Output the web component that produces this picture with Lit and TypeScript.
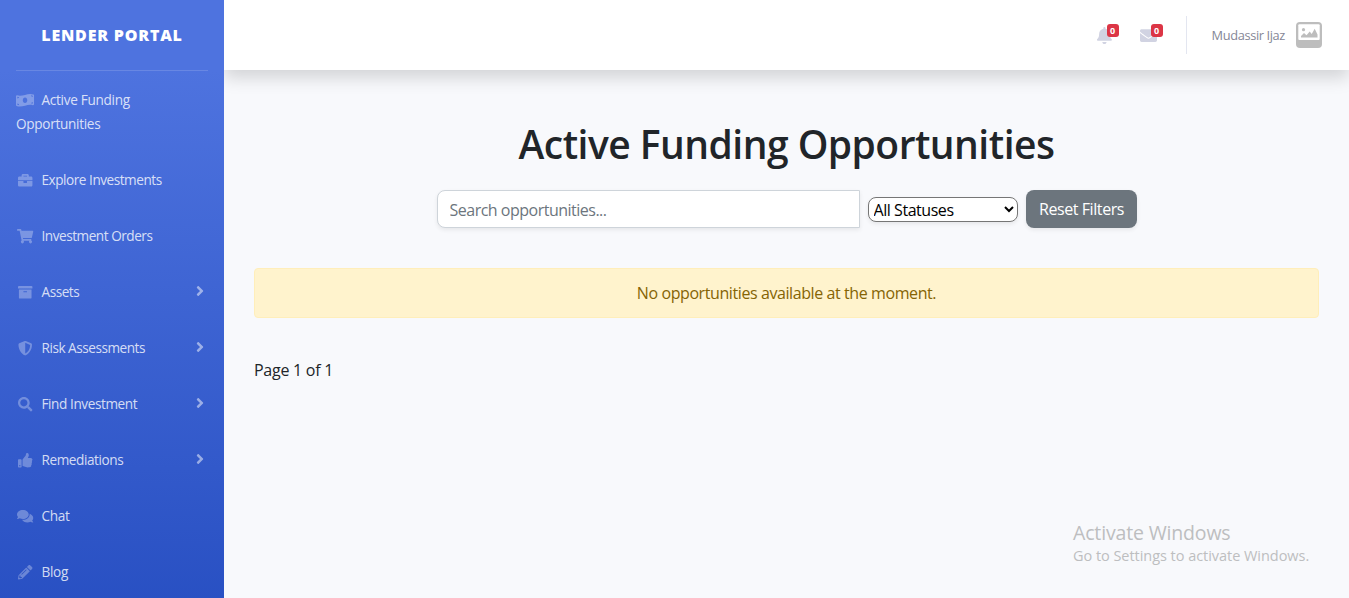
import { LitElement, html, css, svg } from "lit";
import { customElement, property } from "lit/decorators.js";

const ICONS: Record<string, [number, string]> = {
  money: [640, "M621.16 54.46C582.37 38.19 543.55 32 504.75 32c-123.17-.01-246.33 62.34-369.5 62.34-30.89 0-61.76-3.92-92.65-13.72-3.47-1.1-6.95-1.62-10.35-1.62C15.04 79 0 92.32 0 110.81v317.26c0 12.63 7.23 24.6 18.84 29.46C57.63 473.81 96.45 480 135.25 480c123.17 0 246.34-62.35 369.51-62.35 30.89 0 61.76 3.92 92.65 13.72 3.47 1.1 6.95 1.62 10.35 1.62 17.21 0 32.25-13.32 32.25-31.81V83.93c-.01-12.64-7.24-24.6-18.85-29.47zM48 132.22c20.12 5.04 41.12 7.57 62.72 8.93C104.84 170.54 79 192.69 48 192.69v-60.47zm0 285v-47.78c34.37 0 62.18 27.27 63.71 61.4-22.53-1.81-43.59-6.31-63.71-13.62zM320 352c-44.19 0-80-42.99-80-96 0-53.02 35.82-96 80-96s80 42.98 80 96c0 53.03-35.83 96-80 96zm272 27.78c-17.52-4.39-35.71-6.85-54.32-8.44 5.87-26.08 27.5-45.88 54.32-49.28v57.72zm0-236.11c-30.89-3.91-54.86-29.7-55.81-61.55 19.54 2.17 38.09 6.23 55.81 12.66v48.89z"],
  briefcase: [512, "M320 336c0 8.84-7.16 16-16 16h-96c-8.84 0-16-7.16-16-16v-48H0v144c0 25.6 22.4 48 48 48h416c25.6 0 48-22.4 48-48V288H320v48zm144-208h-80V80c0-25.6-22.4-48-48-48H176c-25.6 0-48 22.4-48 48v48H48c-25.6 0-48 22.4-48 48v80h512v-80c0-25.6-22.4-48-48-48zm-144 0H192V96h128v32z"],
  cart: [576, "M528.12 301.319l47.273-208C578.806 78.301 567.391 64 551.99 64H159.208l-9.166-44.81C147.758 8.021 137.93 0 126.529 0H24C10.745 0 0 10.745 0 24v16c0 13.255 10.745 24 24 24h69.883l70.248 343.435C147.325 417.1 136 435.222 136 456c0 30.928 25.072 56 56 56s56-25.072 56-56c0-15.674-6.447-29.835-16.824-40h209.647C430.447 426.165 424 440.326 424 456c0 30.928 25.072 56 56 56s56-25.072 56-56c0-22.172-12.888-41.332-31.579-50.405l5.517-24.276c3.413-15.018-8.002-29.319-23.403-29.319H218.117l-6.545-32h293.145c11.206 0 20.92-7.754 23.403-18.681z"],
  archive: [512, "M32 448c0 17.7 14.3 32 32 32h384c17.7 0 32-14.3 32-32V160H32v288zm160-212c0-6.6 5.4-12 12-12h104c6.6 0 12 5.4 12 12v8c0 6.6-5.4 12-12 12H204c-6.6 0-12-5.4-12-12v-8zM480 32H32C14.3 32 0 46.3 0 64v48c0 8.8 7.2 16 16 16h480c8.8 0 16-7.2 16-16V64c0-17.7-14.3-32-32-32z"],
  shield: [512, "M466.5 83.7l-192-80a48.15 48.15 0 0 0-36.9 0l-192 80C27.7 91.1 16 108.6 16 128c0 198.5 114.5 335.7 221.5 380.3 11.8 4.9 25.1 4.9 36.9 0C360.1 472.6 496 349.3 496 128c0-19.4-11.7-36.9-29.5-44.3zM256.1 446.3l-.1-381 175.9 73.3c-3.3 151.4-82.1 261.1-175.8 307.7z"],
  search: [512, "M505 442.7L405.3 343c-4.5-4.5-10.6-7-17-7H372c27.6-35.3 44-79.7 44-128C416 93.1 322.9 0 208 0S0 93.1 0 208s93.1 208 208 208c48.3 0 92.7-16.4 128-44v16.3c0 6.4 2.5 12.5 7 17l99.7 99.7c9.4 9.4 24.6 9.4 33.9 0l28.3-28.3c9.4-9.4 9.4-24.6.1-34zM208 336c-70.7 0-128-57.2-128-128 0-70.7 57.2-128 128-128 70.7 0 128 57.2 128 128 0 70.7-57.2 128-128 128z"],
  thumb: [512, "M104 224H24c-13.255 0-24 10.745-24 24v240c0 13.255 10.745 24 24 24h80c13.255 0 24-10.745 24-24V248c0-13.255-10.745-24-24-24zM64 472c-13.255 0-24-10.745-24-24s10.745-24 24-24 24 10.745 24 24-10.745 24-24 24zM384 81.452c0 42.416-25.97 66.208-33.277 94.548h101.723c33.397 0 59.397 27.746 59.553 58.098.084 17.938-7.546 37.249-19.439 49.197l-.11.11c9.836 23.337 8.237 56.037-9.308 79.469 8.681 25.895-.069 57.704-16.382 74.757 4.298 17.598 2.244 32.575-6.148 44.632C440.202 511.587 389.616 512 346.839 512l-2.845-.001c-48.287-.017-87.806-17.598-119.56-31.725-15.957-7.099-36.821-15.887-52.651-16.178-6.54-.12-11.783-5.457-11.783-11.998v-213.77c0-3.2 1.282-6.271 3.558-8.521 39.614-39.144 56.648-80.587 89.117-113.111 14.804-14.832 20.188-37.236 25.393-58.902C282.515 39.293 291.817 0 312 0c24 0 72 8 72 81.452z"],
  comments: [576, "M416 192c0-88.4-93.1-160-208-160S0 103.6 0 192c0 34.3 14.1 65.9 38 92-13.4 30.2-35.5 54.2-35.8 54.5-2.2 2.3-2.8 5.7-1.5 8.7S4.8 352 8 352c36.6 0 66.9-12.3 88.7-25 32.2 15.7 70.3 25 111.3 25 114.9 0 208-71.6 208-160zm122 220c23.9-26 38-57.7 38-92 0-66.9-53.5-124.2-129.3-148.1.9 6.6 1.3 13.3 1.3 20.1 0 105.9-107.7 192-240 192-10.8 0-21.3-.8-31.7-1.9C207.8 439.6 281.8 480 368 480c41 0 79.1-9.2 111.3-25 21.8 12.7 52.1 25 88.7 25 3.2 0 6.1-1.9 7.3-4.8 1.3-2.9.7-6.3-1.5-8.7-.3-.3-22.4-24.2-35.8-54.5z"],
  pencil: [512, "M497.9 142.1l-46.1 46.1c-4.7 4.7-12.3 4.7-17 0l-111-111c-4.7-4.7-4.7-12.3 0-17l46.1-46.1c18.7-18.7 49.1-18.7 67.9 0l60.1 60.1c18.8 18.7 18.8 49.1 0 67.9zM284.2 99.8L21.6 362.4.4 483.9c-2.9 16.4 11.4 30.6 27.8 27.8l121.5-21.3 262.6-262.6c4.7-4.7 4.7-12.3 0-17l-111-111c-4.8-4.7-12.4-4.7-17.1 0zM124.1 339.9c-5.5-5.5-5.5-14.3 0-19.8l154-154c5.5-5.5 14.3-5.5 19.8 0s5.5 14.3 0 19.8l-154 154c-5.5 5.5-14.3 5.5-19.8 0zM88 424h48v36.3l-64.5 11.3-31.1-31.1L51.7 376H88v48z"],
  bell: [448, "M224 512c35.32 0 63.97-28.65 63.97-64H160.03c0 35.35 28.65 64 63.97 64zm215.39-149.71c-19.32-20.76-55.47-51.99-55.47-154.29 0-77.7-54.48-139.9-127.94-155.16V32c0-17.67-14.32-32-31.98-32s-31.98 14.33-31.98 32v20.84C118.56 68.1 64.08 130.3 64.08 208c0 102.3-36.15 133.53-55.47 154.29-6 6.45-8.66 14.16-8.61 21.71.11 16.4 12.98 32 32.1 32h383.8c19.12 0 32-15.6 32.1-32 .05-7.55-2.61-15.27-8.61-21.71z"],
  envelope: [512, "M502.3 190.8c3.9-3.1 9.7-.2 9.7 4.7V400c0 26.5-21.5 48-48 48H48c-26.5 0-48-21.5-48-48V195.6c0-5 5.7-7.8 9.7-4.7 22.4 17.4 52.1 39.5 154.1 113.6 21.1 15.4 56.7 47.8 92.2 47.6 35.7.3 72-32.8 92.3-47.6 102-74.1 131.6-96.3 154-113.7zM256 320c23.2.4 56.6-29.2 73.4-41.4 132.7-96.3 142.8-104.7 173.4-128.7 5.8-4.5 9.2-11.5 9.2-18.9v-19c0-26.5-21.5-48-48-48H48c-26.5 0-48 21.5-48 48v19c0 7.4 3.4 14.3 9.2 18.9 30.6 23.9 40.7 32.4 173.4 128.7 16.8 12.2 50.2 41.8 73.4 41.4z"],
  angle: [256, "M224.3 273l-136 136c-9.4 9.4-24.6 9.4-33.9 0l-22.6-22.6c-9.4-9.4-9.4-24.6 0-33.9l96.4-96.4-96.4-96.4c-9.4-9.4-9.4-24.6 0-33.9L54.3 103c9.4-9.4 24.6-9.4 33.9 0l136 136c9.5 9.4 9.5 24.6.1 34z"],
};

@customElement("fa-icon")
class FaIcon extends LitElement {
  static styles = css`
    :host { display: inline-flex; justify-content: center; align-items: center; }
    svg { display: block; flex: none; height: 1em; width: auto; fill: currentColor; overflow: visible; }
  `;
  @property() name = "bell";
  render() {
    const [w, d] = ICONS[this.name];
    return html`<svg viewBox="0 0 ${w} 512">${svg`<path d=${d}></path>`}</svg>`;
  }
}

interface NavItem { icon: string; label: string; cls: string; expandable?: boolean }

const NAV: NavItem[] = [
  { icon: "money", label: "Active Funding Opportunities", cls: "snug" },
  { icon: "briefcase", label: "Explore Investments", cls: "tight" },
  { icon: "cart", label: "Investment Orders", cls: "tight" },
  { icon: "archive", label: "Assets", cls: "tight", expandable: true },
  { icon: "shield", label: "Risk Assessments", cls: "tight", expandable: true },
  { icon: "search", label: "Find Investment", cls: "medium", expandable: true },
  { icon: "thumb", label: "Remediations", cls: "medium", expandable: true },
  { icon: "comments", label: "Chat", cls: "snug" },
  { icon: "pencil", label: "Blog", cls: "snug" },
];

@customElement("side-nav")
class SideNav extends LitElement {
  static styles = css`
    :host {
      display: flex; flex-direction: column; width: 224px; flex: none; height: 698px;
      background: linear-gradient(180deg, #4e73df 10%, #224abe 100%);
      color: rgba(255, 255, 255, 0.8); position: relative; z-index: 1;
    }
    .brand {
      height: 70px; display: flex; align-items: center; justify-content: center;
      color: #fff; font-weight: 800; font-size: 16px; letter-spacing: 0.8px; white-space: nowrap;
    }
    .rule { height: 1px; margin: 0 16px 1px; background: rgba(255, 255, 255, 0.15); }
    .item { display: flex; padding: 16px; line-height: 24px; font-size: 13.6px; }
    .snug { letter-spacing: -0.3px; }
    .medium { letter-spacing: -0.42px; }
    .tight { letter-spacing: -0.47px; }
    .label { flex: 1; }
    .icon { width: 18px; margin-right: 7.5px; font-size: 14.45px; color: rgba(255, 255, 255, 0.3); vertical-align: -2px; }
    .angle { margin-right: 4px; height: 22px; width: 9px; font-size: 16px; color: rgba(255, 255, 255, 0.5); }
  `;
  render() {
    return html`
      <div class="brand">LENDER PORTAL</div>
      <div class="rule"></div>
      ${NAV.map((n) => html`
        <div class="item ${n.cls}">
          <div class="label"><fa-icon class="icon" name=${n.icon}></fa-icon>${n.label}</div>
          ${n.expandable ? html`<fa-icon class="angle" name="angle"></fa-icon>` : ""}
        </div>`)}
    `;
  }
}

@customElement("top-bar")
class TopBar extends LitElement {
  static styles = css`
    :host {
      display: flex; align-items: center; justify-content: flex-end; height: 70px; flex: none;
      box-sizing: border-box; padding-right: 27px; background: #fff;
      box-shadow: 0 8px 16px rgba(0, 0, 0, 0.15); position: relative;
    }
    .alert { position: relative; color: #d1d3e2; font-size: 17px; display: flex; }
    .bell { margin-right: 27px; }
    .mail { margin-right: 29px; }
    .alert fa-icon { width: 17px; }
    .badge {
      position: absolute; left: 11px; top: -2.5px; width: 12px; height: 13px; border-radius: 3px;
      background: #dc3545; color: #fff; font-size: 9px; font-weight: 700; line-height: 13px; text-align: center;
    }
    .divider { width: 1px; height: 38px; background: #e3e6f0; margin-right: 25px; }
    .user { font-size: 12.8px; color: #858796; letter-spacing: -0.37px; margin-right: 11px; white-space: nowrap; }
    .avatar { width: 26px; height: 26px; display: block; }
  `;
  render() {
    return html`
      <div class="alert bell"><fa-icon name="bell"></fa-icon><span class="badge">0</span></div>
      <div class="alert mail"><fa-icon name="envelope"></fa-icon><span class="badge">0</span></div>
      <div class="divider"></div>
      <span class="user">Mudassir Ijaz</span>
      <svg class="avatar" viewBox="0 0 26 26">
        <rect width="26" height="26" rx="4" fill="#bdbdbd"></rect>
        <rect x="2.300" y="2.300" width="21.400" height="15.700" rx="1" fill="#fff"></rect>
        <circle cx="7.500" cy="7.700" r="1.600" fill="#bdbdbd"></circle>
        <path d="M5 15.500v-1.500l3-3 2.500 2.200 3.200-3.700 2 2.500 3-5.200 2.800 5.700v3z" fill="#bdbdbd"></path>
      </svg>
    `;
  }
}

@customElement("app-root")
class AppRoot extends LitElement {
  static styles = css`
    :host {
      display: flex; align-items: flex-start; position: relative; width: 100%; height: 598px; overflow: hidden;
      background: #f8f9fc; font-family: "Open Sans", "Noto Sans", sans-serif; color: #212529; font-size: 16px;
    }
    .content { flex: 1; min-width: 0; display: flex; flex-direction: column; }
    main { padding: 50px 30px 0; display: flex; flex-direction: column; }
    h1 { margin: 0; text-align: center; font-size: 39px; line-height: 48px; font-weight: 600; letter-spacing: -0.52px; white-space: nowrap; }
    .filters { display: flex; gap: 8px; align-items: center; justify-content: center; margin-top: 22px; height: 38px; }
    input, select, button { font-family: inherit; font-size: 16px; box-sizing: border-box; margin: 0; box-shadow: 0 2px 4px rgba(0, 0, 0, 0.075); }
    input {
      width: 423px; height: 38px; padding: 2px 12px 0; border: 1px solid #ced4da; border-radius: 8px 0 0 8px;
      background: #fff; letter-spacing: -0.5px;
    }
    input::placeholder { color: #6c757d; opacity: 1; }
    select { width: 150px; height: 25px; border: 1px solid #767676; border-radius: 8px; background: #fff; color: #000; padding: 0 0 0 1px; letter-spacing: -0.45px; }
    button { width: 111px; height: 38px; padding: 0 0 0 1px; border: 0; border-radius: 8px; background: #6c757d; color: #fff; letter-spacing: -0.42px; white-space: nowrap; }
    .notice {
      margin-top: 40px; height: 50px; box-sizing: border-box; border: 1px solid #ffeeba; border-radius: 4px;
      background: #fff3cd; color: #856404; text-align: center; line-height: 49px; letter-spacing: -0.41px;
    }
    .page { margin-top: 40px; line-height: 24px; letter-spacing: -0.26px; }
    .watermark { position: absolute; left: 1073px; top: 521px; color: #bdbec0; white-space: nowrap; }
    .wm-title { font-size: 19.500px; line-height: 24px; letter-spacing: -0.16px; }
    .wm-text { font-size: 14.500px; line-height: 22px; letter-spacing: -0.04px; }
  `;
  render() {
    return html`
      <side-nav></side-nav>
      <div class="content">
        <top-bar></top-bar>
        <main>
          <h1>Active Funding Opportunities</h1>
          <div class="filters">
            <input type="text" placeholder="Search opportunities..." />
            <select><option>All Statuses</option></select>
            <button>Reset Filters</button>
          </div>
          <div class="notice">No opportunities available at the moment.</div>
          <div class="page">Page 1 of 1</div>
        </main>
      </div>
      <div class="watermark">
        <div class="wm-title">Activate Windows</div>
        <div class="wm-text">Go to Settings to activate Windows.</div>
      </div>
    `;
  }
}
